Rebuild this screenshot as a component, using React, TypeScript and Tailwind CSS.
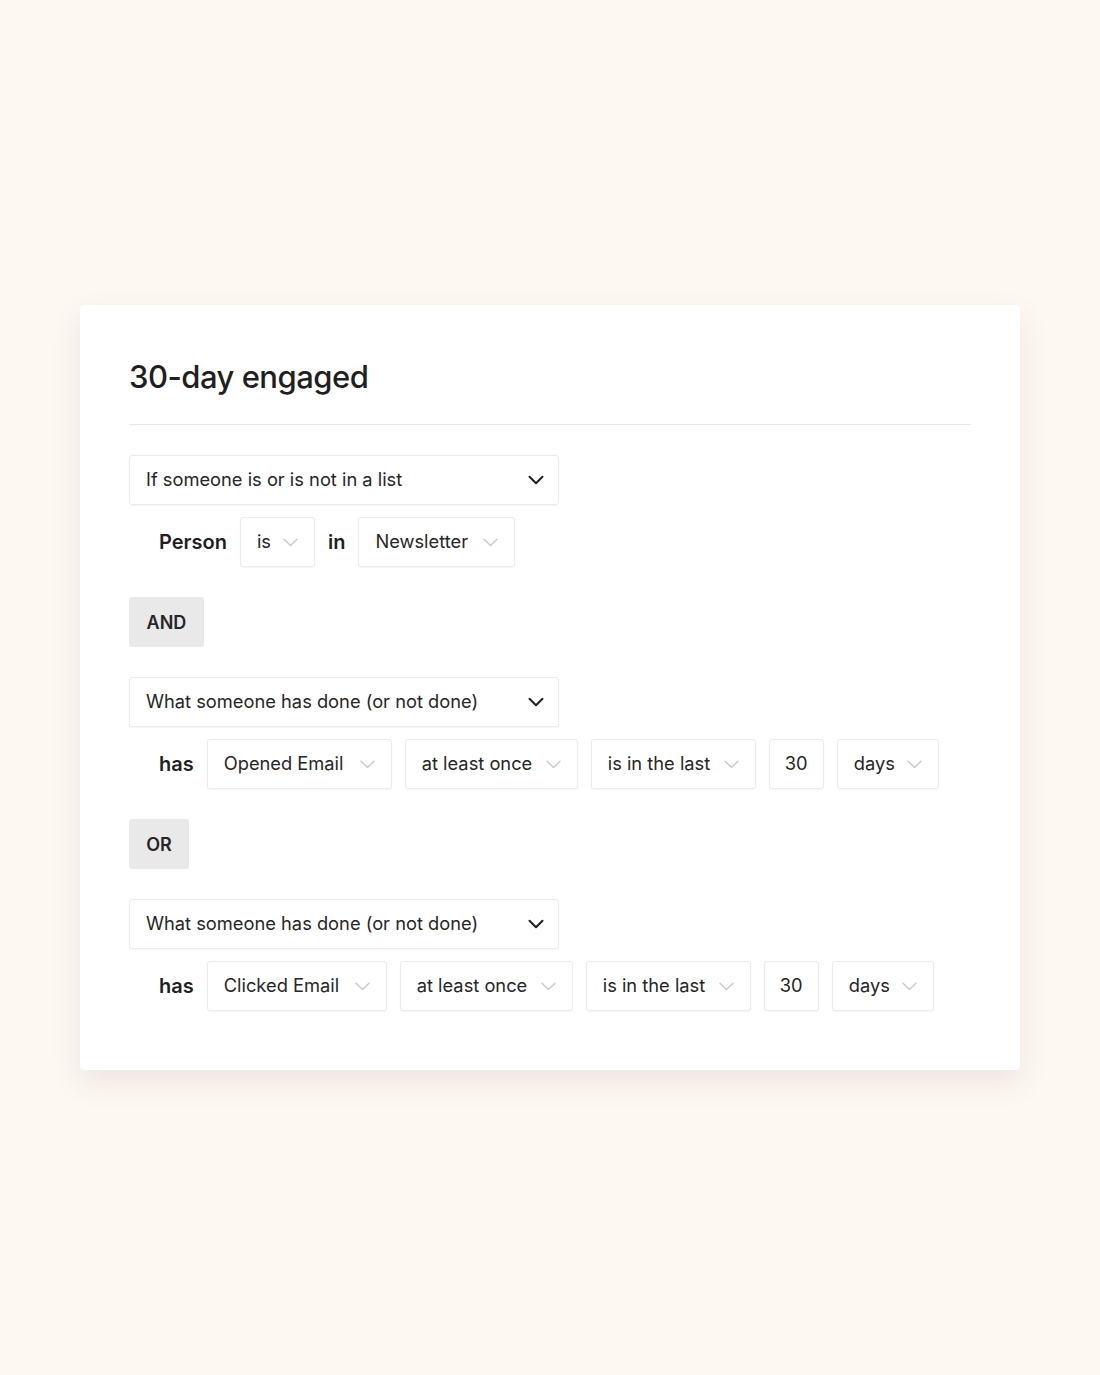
import React from "react";

const Chevron = ({ dark }: { dark?: boolean }) =>
  dark ? (
    <svg width="16" height="10" viewBox="0 0 16 10" fill="none">
      <path d="M1.5 1.8L8 8.2L14.5 1.8" stroke="#1f1f1f" strokeWidth="2" strokeLinecap="round" strokeLinejoin="round" />
    </svg>
  ) : (
    <svg width="15" height="9" viewBox="0 0 15 9" fill="none">
      <path d="M1 1.2L7.5 7.5L14 1.2" stroke="#c9c9c9" strokeWidth="1.4" strokeLinecap="round" strokeLinejoin="round" />
    </svg>
  );

const Select = ({ label, width, chevron = true }: { label: string; width: string; chevron?: boolean }) => (
  <div
    className={`flex h-[50px] items-center justify-between rounded-[3px] border border-[#ebebeb] bg-white px-4 text-[18.3px] text-[#262626] shadow-[0_1px_2px_rgba(0,0,0,0.04)] ${width}`}
  >
    <span>{label}</span>
    {chevron && <Chevron />}
  </div>
);

const Condition = ({ label }: { label: string }) => (
  <div className="flex h-[50px] w-[430px] items-center justify-between rounded-[3px] border border-[#ebebeb] bg-white pl-4 pr-[14px] text-[18.3px] text-[#262626] shadow-[0_1px_2px_rgba(0,0,0,0.04)]">
    <span>{label}</span>
    <Chevron dark />
  </div>
);

const Joiner = ({ label, width }: { label: string; width: string }) => (
  <div className={`flex h-[50px] items-center justify-center rounded-[3px] bg-[#e9e9e9] text-[18px] font-semibold text-[#262626] ${width}`}>
    {label}
  </div>
);

const Label = ({ text }: { text: string }) => (
  <span className="text-[20px] font-semibold text-[#1f1f1f]">{text}</span>
);

const ActivityRow = ({ event, eventWidth }: { event: string; eventWidth: string }) => (
  <div className="flex items-center gap-[13px] pl-[30px]">
    <Label text="has" />
    <Select label={event} width={eventWidth} />
    <Select label="at least once" width="w-[173px]" />
    <Select label="is in the last" width="w-[165px]" />
    <div className="flex h-[50px] w-[55px] items-center justify-center rounded-[3px] border border-[#ebebeb] bg-white text-[18.3px] text-[#262626] shadow-[0_1px_2px_rgba(0,0,0,0.04)]">
      30
    </div>
    <Select label="days" width="w-[102px]" />
  </div>
);

export default function App() {
  return (
    <div
      className="flex h-[1375px] w-full items-center justify-center bg-[#fdf8f2]"
      style={{ fontFamily: "Inter, 'Noto Sans', sans-serif" }}
    >
      <div className="flex h-[765px] w-[940px] flex-col rounded-[4px] bg-white px-[49px] pt-[52px] shadow-[0_12px_30px_rgba(90,70,40,0.10)]">
        <h1 className="text-[31px] font-medium leading-[40px] tracking-[-0.5px] text-[#1f1f1f]">30-day engaged</h1>
        <div className="mt-[27px] h-px w-[842px] bg-[#e8e8e8]" />

        <div className="mt-[30px] flex flex-col gap-[12px]">
          <Condition label="If someone is or is not in a list" />
          <div className="flex items-center gap-[13px] pl-[30px]">
            <Label text="Person" />
            <Select label="is" width="w-[75px]" />
            <Label text="in" />
            <Select label="Newsletter" width="w-[157px]" />
          </div>
        </div>

        <div className="mt-[30px]">
          <Joiner label="AND" width="w-[75px]" />
        </div>

        <div className="mt-[30px] flex flex-col gap-[12px]">
          <Condition label="What someone has done (or not done)" />
          <ActivityRow event="Opened Email" eventWidth="w-[185px]" />
        </div>

        <div className="mt-[30px]">
          <Joiner label="OR" width="w-[60px]" />
        </div>

        <div className="mt-[30px] flex flex-col gap-[12px]">
          <Condition label="What someone has done (or not done)" />
          <ActivityRow event="Clicked Email" eventWidth="w-[180px]" />
        </div>
      </div>
    </div>
  );
}
